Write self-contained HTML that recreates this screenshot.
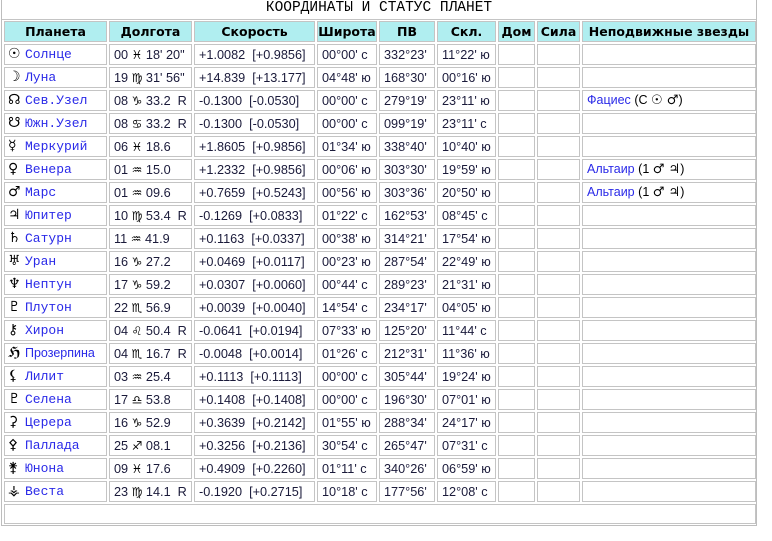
<!DOCTYPE html>
<html><head><meta charset="utf-8"><style>
html,body{margin:0;padding:0;background:#fff;}
.wrap{position:absolute;left:1px;top:0;width:756px;height:526px;border:1px solid #bdbdbd;border-top:none;box-sizing:border-box;}
.title{position:absolute;left:0;top:0;width:754px;height:19px;border-bottom:1px solid #c4c4c4;text-align:center;font:14.5px "Liberation Mono",monospace;line-height:17px;color:#000;}
table{position:absolute;left:0;top:19px;border-collapse:separate;border-spacing:2px;table-layout:fixed;width:756px;}
td,th{border:1px solid #c4c4c4;padding:0 0 0 4px;height:21px;line-height:19px;box-sizing:border-box;white-space:nowrap;overflow:hidden;font:12.7px "Liberation Sans",sans-serif;color:#1a1a3a;}
th{background:#b0eef0;font-family:"DejaVu Sans",sans-serif;font-weight:bold;font-size:12.5px;text-align:center;padding:0;color:#000;}
td.p{font-family:"Liberation Mono",monospace;font-size:13px;color:#2a2ae8;padding-left:3px}
td.p b{display:inline-block;width:17px;color:#000;font-family:"DejaVu Sans",sans-serif;font-weight:bold;font-size:14px;line-height:17px}
.z{font-family:"DejaVu Sans",sans-serif;font-size:12px;color:#000}
a{color:#2a2ae8;text-decoration:none;font-family:"Liberation Sans",sans-serif;font-size:12.5px}
.fs{font-family:"Liberation Sans",sans-serif;font-size:12.5px;color:#000}
.fs i{font-style:normal;font-family:"DejaVu Sans",sans-serif;font-size:13px}
tr.last td{height:20px}
</style></head><body>
<div class="wrap">
<div class="title">КООРДИНАТЫ И СТАТУС ПЛАНЕТ</div>
<table>
<colgroup><col style="width:103px"><col style="width:83px"><col style="width:121px"><col style="width:60px"><col style="width:56px"><col style="width:59px"><col style="width:37px"><col style="width:43px"><col style="width:174px"></colgroup>
<tr><th>Планета</th><th>Долгота</th><th>Скорость</th><th>Широта</th><th>ПВ</th><th>Скл.</th><th>Дом</th><th>Сила</th><th>Неподвижные звезды</th></tr>
<tr><td class="p"><b>☉</b>Солнце</td><td>00 <span class="z">♓&#xFE0E;</span> 18' 20"</td><td>+1.0082 &nbsp;[+0.9856]</td><td>00°00' c</td><td>332°23'</td><td>11°22' ю</td><td></td><td></td><td></td></tr>
<tr><td class="p"><b>☽</b>Луна</td><td>19 <span class="z">♍&#xFE0E;</span> 31' 56"</td><td>+14.839 &nbsp;[+13.177]</td><td>04°48' ю</td><td>168°30'</td><td>00°16' ю</td><td></td><td></td><td></td></tr>
<tr><td class="p"><b>☊</b>Сев.Узел</td><td>08 <span class="z">♑&#xFE0E;</span> 33.2 &nbsp;R</td><td>-0.1300 &nbsp;[-0.0530]</td><td>00°00' c</td><td>279°19'</td><td>23°11' ю</td><td></td><td></td><td><a>Фациес</a> <span class="fs">(С <i>☉ ♂</i>)</span></td></tr>
<tr><td class="p"><b>☋</b>Южн.Узел</td><td>08 <span class="z">♋&#xFE0E;</span> 33.2 &nbsp;R</td><td>-0.1300 &nbsp;[-0.0530]</td><td>00°00' c</td><td>099°19'</td><td>23°11' c</td><td></td><td></td><td></td></tr>
<tr><td class="p"><b>☿</b>Меркурий</td><td>06 <span class="z">♓&#xFE0E;</span> 18.6</td><td>+1.8605 &nbsp;[+0.9856]</td><td>01°34' ю</td><td>338°40'</td><td>10°40' ю</td><td></td><td></td><td></td></tr>
<tr><td class="p"><b>♀</b>Венера</td><td>01 <span class="z">♒&#xFE0E;</span> 15.0</td><td>+1.2332 &nbsp;[+0.9856]</td><td>00°06' ю</td><td>303°30'</td><td>19°59' ю</td><td></td><td></td><td><a>Альтаир</a> <span class="fs">(1 <i>♂ ♃</i>)</span></td></tr>
<tr><td class="p"><b>♂</b>Марс</td><td>01 <span class="z">♒&#xFE0E;</span> 09.6</td><td>+0.7659 &nbsp;[+0.5243]</td><td>00°56' ю</td><td>303°36'</td><td>20°50' ю</td><td></td><td></td><td><a>Альтаир</a> <span class="fs">(1 <i>♂ ♃</i>)</span></td></tr>
<tr><td class="p"><b>♃</b>Юпитер</td><td>10 <span class="z">♍&#xFE0E;</span> 53.4 &nbsp;R</td><td>-0.1269 &nbsp;[+0.0833]</td><td>01°22' c</td><td>162°53'</td><td>08°45' c</td><td></td><td></td><td></td></tr>
<tr><td class="p"><b>♄</b>Сатурн</td><td>11 <span class="z">♒&#xFE0E;</span> 41.9</td><td>+0.1163 &nbsp;[+0.0337]</td><td>00°38' ю</td><td>314°21'</td><td>17°54' ю</td><td></td><td></td><td></td></tr>
<tr><td class="p"><b>♅</b>Уран</td><td>16 <span class="z">♑&#xFE0E;</span> 27.2</td><td>+0.0469 &nbsp;[+0.0117]</td><td>00°23' ю</td><td>287°54'</td><td>22°49' ю</td><td></td><td></td><td></td></tr>
<tr><td class="p"><b>♆</b>Нептун</td><td>17 <span class="z">♑&#xFE0E;</span> 59.2</td><td>+0.0307 &nbsp;[+0.0060]</td><td>00°44' c</td><td>289°23'</td><td>21°31' ю</td><td></td><td></td><td></td></tr>
<tr><td class="p"><b>♇</b>Плутон</td><td>22 <span class="z">♏&#xFE0E;</span> 56.9</td><td>+0.0039 &nbsp;[+0.0040]</td><td>14°54' c</td><td>234°17'</td><td>04°05' ю</td><td></td><td></td><td></td></tr>
<tr><td class="p"><b>⚷</b>Хирон</td><td>04 <span class="z">♌&#xFE0E;</span> 50.4 &nbsp;R</td><td>-0.0641 &nbsp;[+0.0194]</td><td>07°33' ю</td><td>125°20'</td><td>11°44' c</td><td></td><td></td><td></td></tr>
<tr><td class="p"><b>ℌ</b><span style="font-family:'Liberation Sans',sans-serif;font-size:12.5px">Прозерпина</span></td><td>04 <span class="z">♏&#xFE0E;</span> 16.7 &nbsp;R</td><td>-0.0048 &nbsp;[+0.0014]</td><td>01°26' c</td><td>212°31'</td><td>11°36' ю</td><td></td><td></td><td></td></tr>
<tr><td class="p"><b>⚸</b>Лилит</td><td>03 <span class="z">♒&#xFE0E;</span> 25.4</td><td>+0.1113 &nbsp;[+0.1113]</td><td>00°00' c</td><td>305°44'</td><td>19°24' ю</td><td></td><td></td><td></td></tr>
<tr><td class="p"><b>♇</b>Селена</td><td>17 <span class="z">♎&#xFE0E;</span> 53.8</td><td>+0.1408 &nbsp;[+0.1408]</td><td>00°00' c</td><td>196°30'</td><td>07°01' ю</td><td></td><td></td><td></td></tr>
<tr><td class="p"><b>⚳</b>Церера</td><td>16 <span class="z">♑&#xFE0E;</span> 52.9</td><td>+0.3639 &nbsp;[+0.2142]</td><td>01°55' ю</td><td>288°34'</td><td>24°17' ю</td><td></td><td></td><td></td></tr>
<tr><td class="p"><b>⚴</b>Паллада</td><td>25 <span class="z">♐&#xFE0E;</span> 08.1</td><td>+0.3256 &nbsp;[+0.2136]</td><td>30°54' c</td><td>265°47'</td><td>07°31' c</td><td></td><td></td><td></td></tr>
<tr><td class="p"><b>⚵</b>Юнона</td><td>09 <span class="z">♓&#xFE0E;</span> 17.6</td><td>+0.4909 &nbsp;[+0.2260]</td><td>01°11' c</td><td>340°26'</td><td>06°59' ю</td><td></td><td></td><td></td></tr>
<tr><td class="p"><b>⚶</b>Веста</td><td>23 <span class="z">♍&#xFE0E;</span> 14.1 &nbsp;R</td><td>-0.1920 &nbsp;[+0.2715]</td><td>10°18' c</td><td>177°56'</td><td>12°08' c</td><td></td><td></td><td></td></tr>
<tr class="last"><td colspan="9"></td></tr>
</table>
</div>
</body></html>
